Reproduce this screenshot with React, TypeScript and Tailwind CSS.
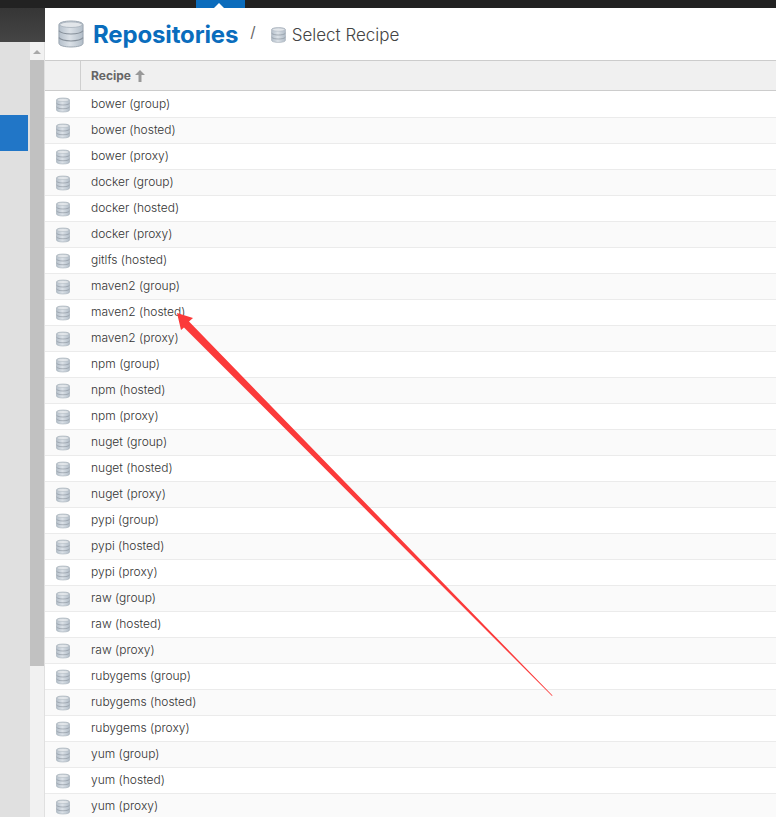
const rows = ["bower (group)","bower (hosted)","bower (proxy)","docker (group)","docker (hosted)","docker (proxy)","gitlfs (hosted)","maven2 (group)","maven2 (hosted)","maven2 (proxy)","npm (group)","npm (hosted)","npm (proxy)","nuget (group)","nuget (hosted)","nuget (proxy)","pypi (group)","pypi (hosted)","pypi (proxy)","raw (group)","raw (hosted)","raw (proxy)","rubygems (group)","rubygems (hosted)","rubygems (proxy)","yum (group)","yum (hosted)","yum (proxy)"];

function Db({ className }: { className: string }) {
  return (
    <svg viewBox="0 0 28 30" className={className}>
      <defs>
        <linearGradient id="dbg" x1="0" x2="1" y1="0" y2="0">
          <stop offset="0" stopColor="#b4bfca" />
          <stop offset="0.45" stopColor="#dbe1e7" />
          <stop offset="1" stopColor="#b2bdc8" />
        </linearGradient>
      </defs>
      <path d="M1 5c0-2.500 6-4 13-4s13 1.500 13 4v20c0 2.500-6 4-13 4S1 27.500 1 25z" fill="url(#dbg)" stroke="#97a2ad" strokeWidth="1" />
      <ellipse cx="14" cy="5" rx="12" ry="3" fill="#e2e6ea" stroke="#a3adb7" strokeWidth="0.8" />
      <path d="M1 11.500c2 2.500 7 3.500 13 3.500s11-1 13-3.500M1 19c2 2.500 7 3.500 13 3.500s11-1 13-3.500" fill="none" stroke="#868f99" strokeWidth="1.200" />
    </svg>
  );
}

export default function App() {
  return (
    <div className="relative flex flex-col w-[776px] h-[817px] overflow-hidden bg-white font-['Inter','Liberation_Sans',sans-serif]">
      <div className="h-2 shrink-0 bg-[#222222] pl-[196px]">
        <div className="relative w-[49px] h-2 bg-[#0b6cbc]">
          <div className="absolute left-[18px] top-[3px] w-0 h-0 border-x-[5px] border-x-transparent border-b-[5px] border-b-white" />
        </div>
      </div>
      <div className="flex flex-1 min-h-0">
        <aside className="w-[45px] shrink-0 flex flex-col">
          <div className="h-[34px] shrink-0 bg-gradient-to-b from-[#363636] to-[#454545]" />
          <div className="flex flex-1 bg-[#e0e0e0]">
            <div className="w-[30px] pt-[73px]">
              <div className="w-7 h-9 bg-[#2176c7]" />
            </div>
            <div className="w-[14px] bg-[#f1f1f1] flex flex-col items-center pt-2">
              <div className="w-0 h-0 border-x-[4px] border-x-transparent border-b-[4px] border-b-[#a8a8a8] mb-1.5" />
              <div className="w-full h-[606px] bg-[#c1c1c1]" />
            </div>
          </div>
        </aside>
        <main className="flex-1 min-w-0 flex flex-col">
          <header className="h-[52px] shrink-0 flex items-center pl-[13px]">
            <Db className="w-[26px] h-[30px]" />
            <h1 className="ml-[9px] mt-0.5 text-[24px] leading-none font-bold text-[#0a6dbd] tracking-[-0.15px]">Repositories</h1>
            <span className="ml-3 -mt-1 text-[15px] text-[#666666]">/</span>
            <Db className="ml-[15px] mt-0.5 w-[15px] h-4" />
            <span className="ml-[6px] mt-1 text-[17px] font-light text-[#444444]">Select Recipe</span>
          </header>
          <div className="h-[31px] shrink-0 flex items-center bg-[#f0f0f0] border-y border-[#cccccc]">
            <div className="w-9 h-full border-r border-[#cfcfcf]" />
            <div className="pl-[10px] flex items-center gap-1 text-[12px] font-bold text-[#666666]">
              Recipe
              <svg viewBox="0 0 10 12" className="w-[10px] h-3" fill="#999999"><path d="M5 0l5 5H6.500v7h-3V5H0z" /></svg>
            </div>
          </div>
          <div className="flex flex-col pt-px">
            {rows.map((r, i) => (
              <div key={r} className={`h-[26px] shrink-0 flex items-center border-b border-[#ebebeb] ${i % 2 ? "bg-[#fafafa]" : "bg-white"}`}>
                <div className="w-[46px] pl-[11px] flex items-center">
                  <Db className="w-[14px] h-4" />
                </div>
                <span className="pb-0.5 text-[12px] font-light text-[#333333]">{r}</span>
              </div>
            ))}
          </div>
        </main>
      </div>
      <svg className="absolute left-0 top-0 pointer-events-none" width="776" height="817" viewBox="0 0 776 817">
        <path d="M177 313L193 318L189 321.500L552.500 695.500L552 696L184 327.500L181 330Z" fill="#fb3a3a" />
      </svg>
    </div>
  );
}
